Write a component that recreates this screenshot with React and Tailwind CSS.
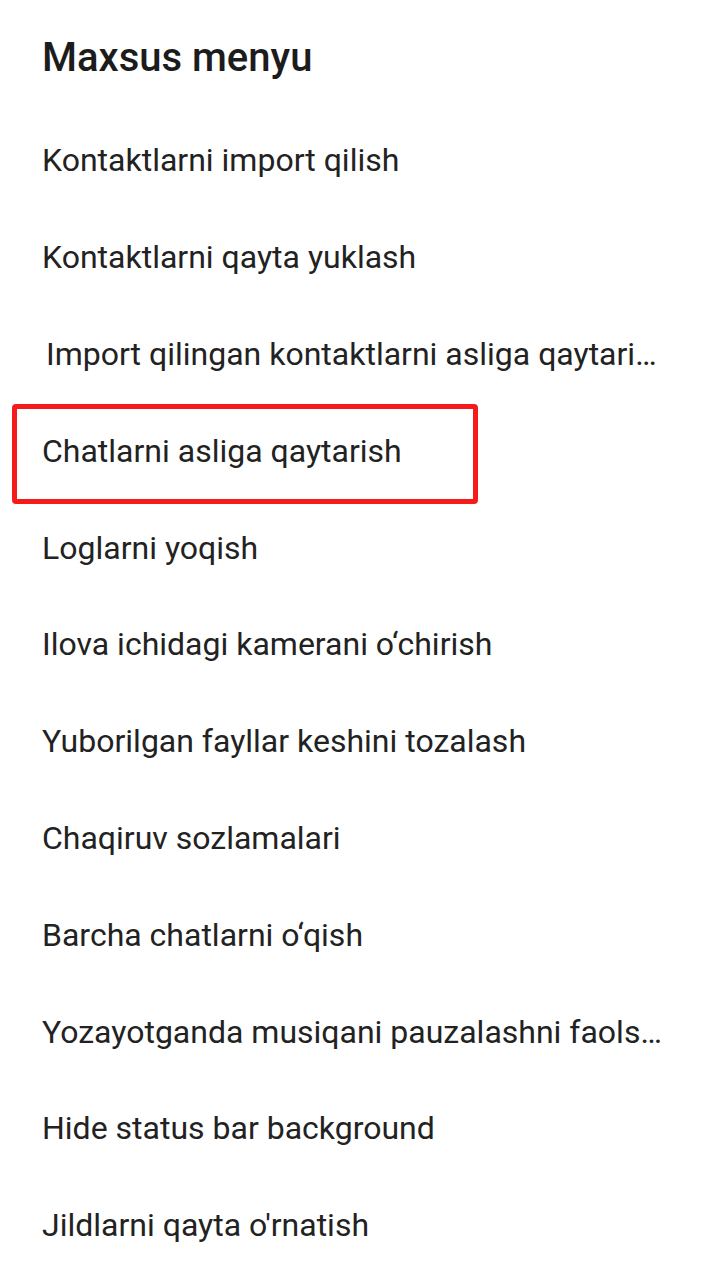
import React from 'react'

const items = [
  'Kontaktlarni import qilish',
  'Kontaktlarni qayta yuklash',
  'Import qilingan kontaktlarni asliga qaytari…',
  'Chatlarni asliga qaytarish',
  'Loglarni yoqish',
  'Ilova ichidagi kamerani o‘chirish',
  'Yuborilgan fayllar keshini tozalash',
  'Chaqiruv sozlamalari',
  'Barcha chatlarni o‘qish',
  'Yozayotganda musiqani pauzalashni faols…',
  'Hide status bar background',
  "Jildlarni qayta o'rnatish",
]

function MenuRow({ label, index }) {
  const highlighted = index === 3
  return (
    <div className="relative flex h-[96.8px] items-center">
      <span
        className={`whitespace-nowrap text-[32px] leading-normal text-[#222222] ${index === 2 ? 'pl-[46px]' : 'pl-[42px]'}`}
      >
        {label}
      </span>
      {highlighted && (
        <div className="pointer-events-none absolute left-[12px] top-[2px] h-[100px] w-[466px] rounded-[4px] border-[5px] border-[#f51b1b]" />
      )}
    </div>
  )
}

export default function App() {
  return (
    <div
      className="min-h-[1280px] w-full bg-white"
      style={{ fontFamily: 'Roboto, "Noto Sans", sans-serif' }}
    >
      <div className="flex h-[112px] items-center pt-[4px] pl-[42px]">
        <h1 className="text-[40px] font-medium leading-normal text-[#1c1c1c]">Maxsus menyu</h1>
      </div>
      <div className="flex flex-col">
        {items.map((label, i) => (
          <MenuRow key={label} label={label} index={i} />
        ))}
      </div>
    </div>
  )
}
